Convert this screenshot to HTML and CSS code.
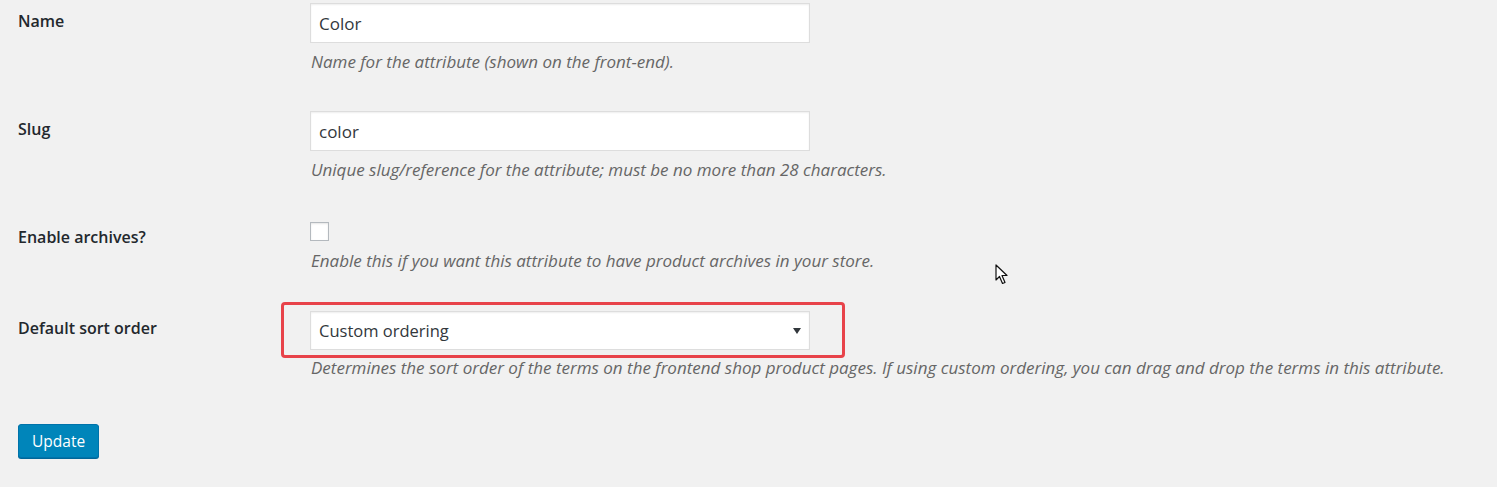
FILE: index.html
```
<html>
    <head>
        <meta charset="UTF-8">
        <title>Edit attribute</title>
        <link rel="stylesheet" href="styles.css">
    </head>
    <body>
        <form class="attr-form">
            <div class="row">
                <label class="row-label" for="attr_name">Name</label>
                <div class="row-field">
                    <input id="attr_name" class="text-input" type="text" value="Color">
                    <p class="description">Name for the attribute (shown on the front-end).</p>
                </div>
            </div>
            <div class="row">
                <label class="row-label" for="attr_slug">Slug</label>
                <div class="row-field">
                    <input id="attr_slug" class="text-input" type="text" value="color">
                    <p class="description">Unique slug/reference for the attribute; must be no more than 28 characters.</p>
                </div>
            </div>
            <div class="row">
                <label class="row-label" for="attr_public">Enable archives?</label>
                <div class="row-field">
                    <input id="attr_public" class="check" type="checkbox">
                    <p class="description desc-check">Enable this if you want this attribute to have product archives in your store.</p>
                    <svg class="cursor" width="14" height="22" viewBox="0 0 14 22">
                        <path d="M1 1 L1 16 L4.5 12.5 L7.5 19.5 L10 18.5 L7 11.5 L12 11.5 Z" fill="#ffffff" stroke="#111111" stroke-width="1.2" stroke-linejoin="round"/>
                    </svg>
                </div>
            </div>
            <div class="row">
                <label class="row-label" for="attr_orderby">Default sort order</label>
                <div class="row-field">
                    <div class="select-wrap">
                        <select id="attr_orderby" class="select-input">
                            <option>Custom ordering</option>
                            <option>Name</option>
                            <option>Name (numeric)</option>
                            <option>Term ID</option>
                        </select>
                        <svg class="select-arrow" width="8" height="6" viewBox="0 0 8 6"><path d="M0 0 L8 0 L4 6 Z" fill="#32373c"/></svg>
                        <div class="highlight"></div>
                    </div>
                    <p class="description desc-select">Determines the sort order of the terms on the frontend shop product pages. If using custom ordering, you can drag and drop the terms in this attribute.</p>
                </div>
            </div>
            <div class="submit-row">
                <button type="button" class="btn-primary">Update</button>
            </div>
        </form>
    </body>
</html>
```

FILE: styles.css
```
html, body
{
    margin: 0;
    padding: 0;
    background-color: #f1f1f1;
    font-family: "Open Sans", "Noto Sans", sans-serif;
    font-size: 14px;
    color: #444444;
}

.attr-form
{
    padding-left: 18px;
    margin-top: -12px;
}

.row
{
    display: flex;
    padding: 15px 0 15px 0;
}

.row-label
{
    width: 292px;
    flex: none;
    margin-top: 8px;
    line-height: 20px;
    font-size: 16px;
    font-weight: 600;
    color: #23282d;
}

.row-field
{
    position: relative;
    display: flex;
    flex-direction: column;
    align-items: flex-start;
}

.text-input
{
    width: 500px;
    height: 40px;
    margin: 0;
    padding: 0 8px;
    box-sizing: border-box;
    border: 1px solid #dddddd;
    background-color: #ffffff;
    box-shadow: inset 0 1px 2px rgba(0, 0, 0, 0.07);
    font-family: inherit;
    font-size: 17px;
    color: #32373c;
    outline: none;
}

.description
{
    margin: 9px 0 9px 1px;
    line-height: 20px;
    font-style: italic;
    font-size: 17px;
    color: #666666;
    white-space: nowrap;
}

.check
{
    -webkit-appearance: none;
    appearance: none;
    width: 19px;
    height: 19px;
    margin: 3px 0 0 0;
    border: 1px solid #b4b9be;
    background-color: #ffffff;
    box-shadow: inset 0 1px 2px rgba(0, 0, 0, 0.1);
    box-sizing: border-box;
}

.desc-check
{
    margin-top: 10px;
}

.cursor
{
    position: absolute;
    left: 685px;
    top: 45px;
}

.select-wrap
{
    position: relative;
    margin-top: 1px;
}

.select-input
{
    -webkit-appearance: none;
    appearance: none;
    display: block;
    width: 500px;
    height: 39px;
    padding: 0 8px;
    border: 1px solid #dddddd;
    border-radius: 0;
    background-color: #ffffff;
    box-shadow: inset 0 1px 2px rgba(0, 0, 0, 0.07);
    font-family: inherit;
    font-size: 16.5px;
    color: #32373c;
    outline: none;
}

.select-arrow
{
    position: absolute;
    right: 9px;
    top: 17px;
}

.highlight
{
    position: absolute;
    left: -29px;
    right: -35px;
    top: -9px;
    bottom: -8px;
    border: 3px solid #e8434a;
    border-radius: 4px;
    pointer-events: none;
}

.desc-select
{
    margin-top: 8px;
}

.submit-row
{
    padding-top: 22px;
}

.btn-primary
{
    height: 34px;
    padding: 0 13px;
    border: 1px solid #0073aa;
    border-radius: 3px;
    background-color: #0085ba;
    box-shadow: 0 1px 0 #006799;
    font-family: inherit;
    font-size: 15.5px;
    color: #ffffff;
    cursor: pointer;
}
```
